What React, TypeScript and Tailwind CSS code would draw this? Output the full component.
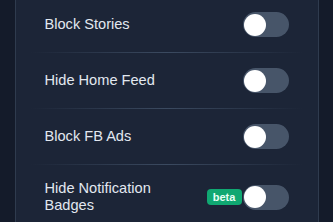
import React from "react";

type Row = { label: React.ReactNode; beta?: boolean };

const rows: Row[] = [
  { label: "Block Stories" },
  { label: "Hide Home Feed" },
  { label: "Block FB Ads" },
  { label: <>Hide Notification<br />Badges</>, beta: true },
];

function Toggle() {
  return (
    <div className="flex h-[25px] w-[46px] shrink-0 items-center rounded-full bg-[#475569] px-[1.5px]">
      <div className="h-[22px] w-[22px] rounded-full bg-white" />
    </div>
  );
}

function Divider() {
  return (
    <div className="-mx-[14px] h-px bg-gradient-to-r from-transparent via-[#3b4a60] to-transparent" />
  );
}

export default function App() {
  return (
    <div
      className="h-[222px] w-[333px] overflow-hidden bg-[#141b2a]"
      style={{ fontFamily: '"Liberation Sans", Arial, sans-serif' }}
    >
      <div className="mx-auto -mt-[3px] h-[240px] w-[304px] border-x border-[#2f3b4e] bg-[#1c2537] px-[29px]">
        {rows.map((r, i) => (
          <div key={i}>
            {i > 0 && <Divider />}
            <div className="flex items-center justify-between py-[15px]">
              <div className="text-[14.6px] leading-[17px] text-[#e2e8f0]">{r.label}</div>
              <div className="flex items-center gap-px">
                {r.beta && (
                  <span className="flex h-4 w-[35px] items-center justify-center rounded-[4px] bg-[#10a872] text-[11px] font-bold text-[#e8fff5]">
                    beta
                  </span>
                )}
                <Toggle />
              </div>
            </div>
          </div>
        ))}
      </div>
    </div>
  );
}
